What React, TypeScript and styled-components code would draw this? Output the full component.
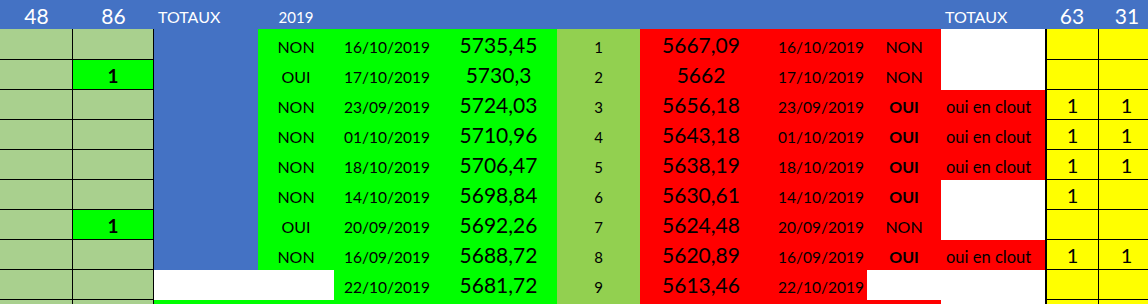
import React from "react";
import styled, { createGlobalStyle } from "styled-components";

const BLUE = "#4472C4";
const PALE = "#A9D08E";
const GREEN = "#00FF00";
const LIME = "#92D050";
const RED = "#FF0000";
const YELLOW = "#FFFF00";
const WHITE = "#FFFFFF";

const GlobalStyle = createGlobalStyle`
  html, body {
    margin: 0;
    padding: 0;
    background: #fff;
  }
  body {
    font-family: Lato, "Open Sans", sans-serif;
    overflow: hidden;
  }
`;

interface CellProps {
  $bg: string;
  $size?: number;
  $bold?: boolean;
  $left?: boolean;
  $indent?: number;
}

interface ScoreProps {
  $first?: boolean;
}

interface Row {
  b?: string;
  c: string;
  d?: string;
  dBg: string;
  date?: string;
  high?: string;
  rank?: string;
  low?: string;
  j?: string;
  jBold?: boolean;
  jBg: string;
  k?: string;
  l?: string;
  m?: string;
}

const rows: Row[] = [
  { c: BLUE, d: "NON", dBg: GREEN, date: "16/10/2019", high: "5735,45", rank: "1", low: "5667,09", j: "NON", jBg: RED },
  { b: "1", c: BLUE, d: "OUI", dBg: GREEN, date: "17/10/2019", high: "5730,3", rank: "2", low: "5662", j: "NON", jBg: RED },
  { c: BLUE, d: "NON", dBg: GREEN, date: "23/09/2019", high: "5724,03", rank: "3", low: "5656,18", j: "OUI", jBold: true, jBg: RED, k: "oui en clout", l: "1", m: "1" },
  { c: BLUE, d: "NON", dBg: GREEN, date: "01/10/2019", high: "5710,96", rank: "4", low: "5643,18", j: "OUI", jBold: true, jBg: RED, k: "oui en clout", l: "1", m: "1" },
  { c: BLUE, d: "NON", dBg: GREEN, date: "18/10/2019", high: "5706,47", rank: "5", low: "5638,19", j: "OUI", jBold: true, jBg: RED, k: "oui en clout", l: "1", m: "1" },
  { c: BLUE, d: "NON", dBg: GREEN, date: "14/10/2019", high: "5698,84", rank: "6", low: "5630,61", j: "OUI", jBold: true, jBg: RED, l: "1" },
  { b: "1", c: BLUE, d: "OUI", dBg: GREEN, date: "20/09/2019", high: "5692,26", rank: "7", low: "5624,48", j: "NON", jBg: RED },
  { c: BLUE, d: "NON", dBg: GREEN, date: "16/09/2019", high: "5688,72", rank: "8", low: "5620,89", j: "OUI", jBold: true, jBg: RED, k: "oui en clout", l: "1", m: "1" },
  { c: WHITE, dBg: WHITE, date: "22/10/2019", high: "5681,72", rank: "9", low: "5613,46", jBg: WHITE },
  { c: GREEN, dBg: GREEN, jBg: RED },
];

export default function App(): React.ReactElement {
  return (
    <Viewport>
      <GlobalStyle />
      <Sheet>
        <Head $big>48</Head>
        <Head $big>86</Head>
        <Head $left>TOTAUX</Head>
        <Head $small>2019</Head>
        <Head />
        <Head />
        <Head />
        <Head />
        <Head />
        <Head />
        <Head $left>TOTAUX</Head>
        <Head $big>63</Head>
        <Head $big>31</Head>

        {rows.map((row, i) => (
          <React.Fragment key={i}>
            <Tally $bg={PALE} />
            <Tally $bg={row.b ? GREEN : PALE} $size={19} $bold>
              {row.b}
            </Tally>
            <Cell $bg={row.c} />
            <Cell $bg={row.dBg}>{row.d}</Cell>
            <Cell $bg={GREEN} $size={15.5}>
              {row.date}
            </Cell>
            <Cell $bg={GREEN} $size={21}>
              {row.high}
            </Cell>
            <Cell $bg={LIME} $size={15}>
              {row.rank}
            </Cell>
            <Cell $bg={RED} $size={21}>
              {row.low}
            </Cell>
            <Cell $bg={RED} $size={15.5} $indent={13}>
              {row.date}
            </Cell>
            <Cell $bg={row.jBg} $bold={row.jBold}>
              {row.j}
            </Cell>
            <Cell $bg={row.k ? RED : WHITE} $size={16.5} $left $indent={5}>
              {row.k}
            </Cell>
            <Score $bg={YELLOW} $size={20} $first>
              {row.l}
            </Score>
            <Score $bg={YELLOW} $size={20}>
              {row.m}
            </Score>
          </React.Fragment>
        ))}
      </Sheet>
    </Viewport>
  );
}

const Viewport = styled.div`
  width: 1148px;
  height: 304px;
  overflow: hidden;
`;

const Sheet = styled.div`
  display: grid;
  grid-template-columns: 73px 81px 104px 76px 106px 117px 83px 122px 105px 74px 104px 54px 56px;
  grid-template-rows: 29px 31px repeat(9, 30px);
  width: 1155px;
`;

const Head = styled.div<{ $big?: boolean; $small?: boolean; $left?: boolean }>`
  box-sizing: border-box;
  display: flex;
  align-items: flex-end;
  justify-content: ${(p) => (p.$left ? "flex-start" : "center")};
  padding: 0 0 ${(p) => (p.$big ? 3 : 4)}px ${(p) => (p.$left ? 4 : 0)}px;
  background: ${BLUE};
  color: #fff;
  font-size: ${(p) => (p.$big ? 21 : p.$small ? 15 : 16)}px;
  line-height: 1;
  white-space: nowrap;
`;

const Cell = styled.div<CellProps>`
  box-sizing: border-box;
  display: flex;
  align-items: flex-end;
  justify-content: ${(p) => (p.$left ? "flex-start" : "center")};
  padding: 0 0 5px ${(p) => p.$indent ?? 0}px;
  background: ${(p) => p.$bg};
  color: #000;
  font-size: ${(p) => p.$size ?? 16}px;
  font-weight: ${(p) => (p.$bold ? 700 : 400)};
  line-height: 1;
  white-space: nowrap;
`;

const Tally = styled(Cell)`
  padding-bottom: 4px;
  border-right: 1px solid #000;
  border-bottom: 1px solid #000;
`;

const Score = styled(Cell)<ScoreProps>`
  padding-bottom: 4px;
  border-left: ${(p) => (p.$first ? "2px solid #000" : "none")};
  border-right: 1px solid #000;
  border-bottom: 1px solid #000;
`;
